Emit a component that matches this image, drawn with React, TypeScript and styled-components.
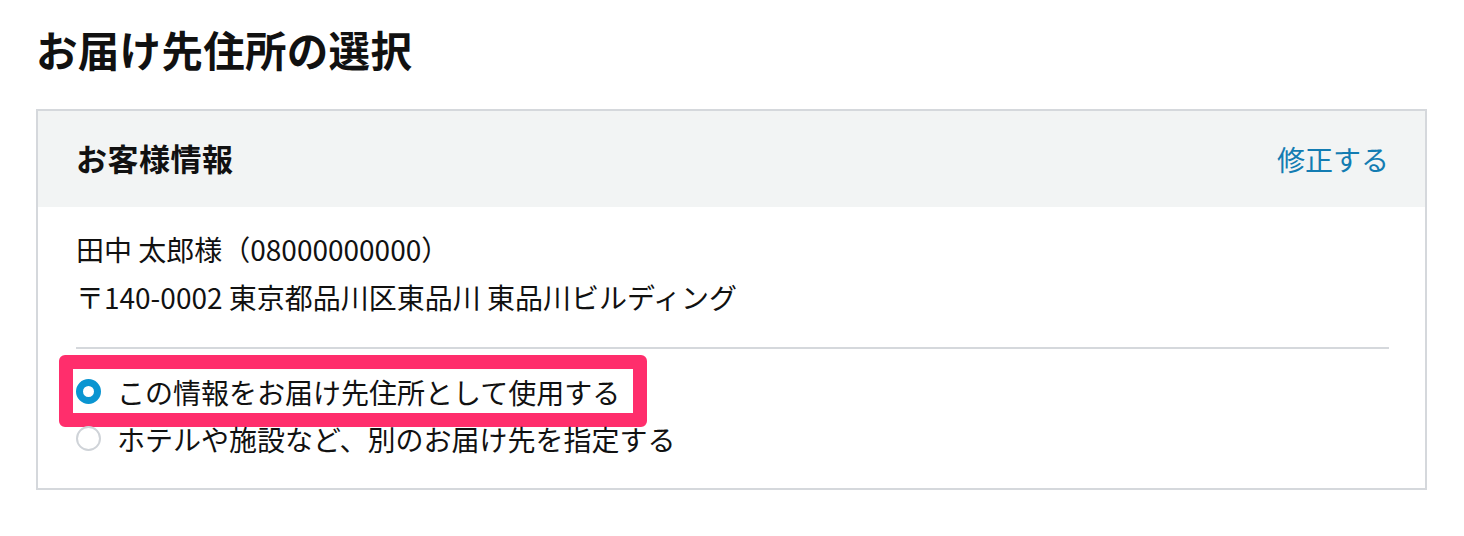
import React from "react";
import styled, { createGlobalStyle } from "styled-components";

const GlobalStyle = createGlobalStyle`
  html, body { margin: 0; padding: 0; background: #ffffff; }
  body {
    font-family: "Noto Sans CJK JP", "Noto Sans", "Liberation Sans", sans-serif;
    color: #111111;
  }
`;

const Page = styled.div`
  padding: 18px 37px 0 36px;
  width: 1391px;
`;

const Title = styled.h1`
  margin: 0 0 28px 0;
  font-size: 41.5px;
  line-height: 63px;
  font-weight: 700;
  letter-spacing: 0.3px;
`;

const Card = styled.section`
  border: 2px solid #d5d8dc;
  background: #ffffff;
`;

const CardHeader = styled.header`
  display: flex;
  align-items: center;
  justify-content: space-between;
  height: 96px;
  padding: 0 36px 0 38px;
  background: #f2f4f4;
`;

const HeaderTitle = styled.h2`
  margin: 0;
  font-size: 31px;
  font-weight: 700;
  letter-spacing: 0.5px;
  transform: translateY(-2px);
`;

const EditLink = styled.a`
  font-size: 28px;
  color: #137cb2;
  text-decoration: none;
  cursor: pointer;
`;

const CardBody = styled.div`
  padding: 18px 36px 26px 38px;
`;

const InfoLine = styled.p`
  margin: 0;
  font-size: 28px;
  line-height: 48px;
`;

const Divider = styled.hr`
  border: none;
  border-top: 2px solid #d5d8dc;
  margin: 26px 0 19px 0;
`;

const Options = styled.div`
  display: flex;
  flex-direction: column;
`;

const OptionRow = styled.label`
  position: relative;
  display: flex;
  align-items: center;
  gap: 16px;
  height: 47px;
  font-size: 28px;
  cursor: pointer;
`;

const Radio = styled.span<{ $checked?: boolean }>`
  box-sizing: border-box;
  flex: none;
  width: 25px;
  height: 25px;
  border-radius: 50%;
  border: ${(p) => (p.$checked ? "7px solid #0a95d1" : "2px solid #cfd3d8")};
  background: #ffffff;
`;

const Highlight = styled.span`
  position: absolute;
  left: -17px;
  top: -13px;
  width: 588px;
  height: 72px;
  box-sizing: border-box;
  border: 14px solid #ff2e6c;
  border-radius: 6px;
  pointer-events: none;
`;

export default function App() {
  return (
    <>
      <GlobalStyle />
      <Page>
        <Title>お届け先住所の選択</Title>
        <Card>
          <CardHeader>
            <HeaderTitle>お客様情報</HeaderTitle>
            <EditLink>修正する</EditLink>
          </CardHeader>
          <CardBody>
            <InfoLine>田中 太郎様（08000000000）</InfoLine>
            <InfoLine>〒140-0002 東京都品川区東品川 東品川ビルディング</InfoLine>
            <Divider />
            <Options>
              <OptionRow>
                <Radio $checked />
                この情報をお届け先住所として使用する
                <Highlight />
              </OptionRow>
              <OptionRow>
                <Radio />
                ホテルや施設など、別のお届け先を指定する
              </OptionRow>
            </Options>
          </CardBody>
        </Card>
      </Page>
    </>
  );
}
